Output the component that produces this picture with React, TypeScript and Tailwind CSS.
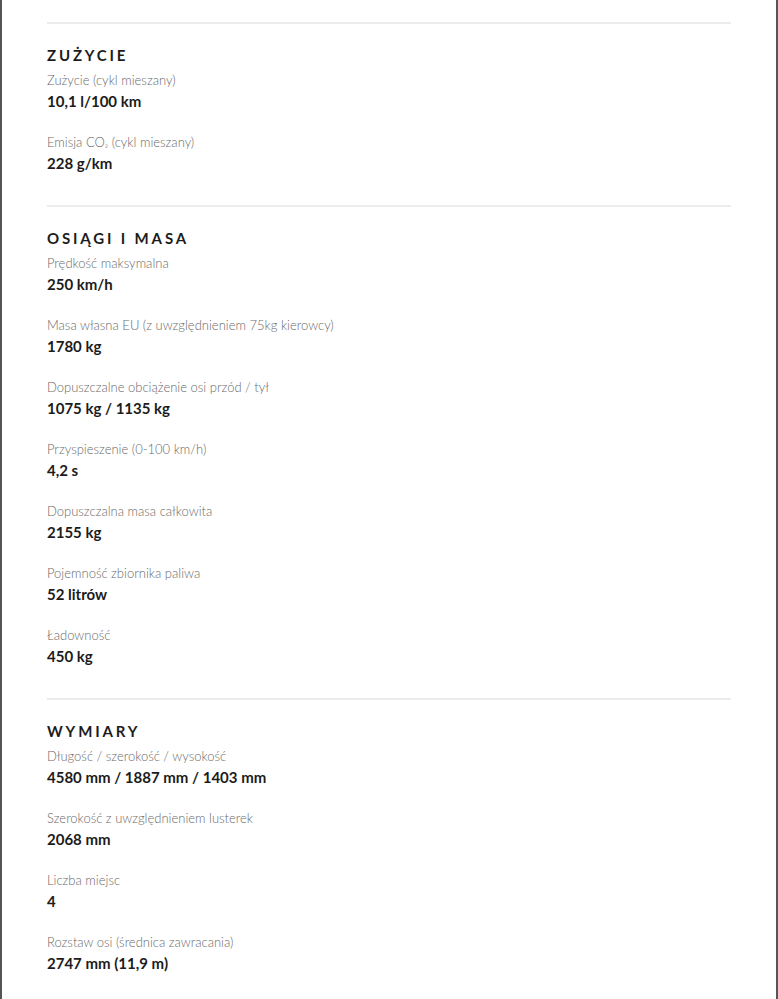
import React from 'react'

interface ISpec {
  label: React.ReactNode
  value: string
}

interface ISection {
  title: string
  items: ISpec[]
}

const sections: ISection[] = [
  {
    title: 'Zużycie',
    items: [
      { label: 'Zużycie (cykl mieszany)', value: '10,1 l/100 km' },
      { label: <>Emisja CO<span className="text-[10px]">₂</span> (cykl mieszany)</>, value: '228 g/km' },
    ],
  },
  {
    title: 'Osiągi i masa',
    items: [
      { label: 'Prędkość maksymalna', value: '250 km/h' },
      { label: 'Masa własna EU (z uwzględnieniem 75kg kierowcy)', value: '1780 kg' },
      { label: 'Dopuszczalne obciążenie osi przód / tył', value: '1075 kg / 1135 kg' },
      { label: 'Przyspieszenie (0-100 km/h)', value: '4,2 s' },
      { label: 'Dopuszczalna masa całkowita', value: '2155 kg' },
      { label: 'Pojemność zbiornika paliwa', value: '52 litrów' },
      { label: 'Ładowność', value: '450 kg' },
    ],
  },
  {
    title: 'Wymiary',
    items: [
      { label: 'Długość / szerokość / wysokość', value: '4580 mm / 1887 mm / 1403 mm' },
      { label: 'Szerokość z uwzględnieniem lusterek', value: '2068 mm' },
      { label: 'Liczba miejsc', value: '4' },
      { label: 'Rozstaw osi (średnica zawracania)', value: '2747 mm (11,9 m)' },
      { label: 'Pojemność bagażnika', value: '440 l' },
    ],
  },
]

const Spec: React.FC<ISpec> = ({ label, value }) => (
  <div className="pb-[20px]">
    <p className="h-[20px] text-[13px] leading-[20px] font-light text-[#6a6a6a]">{label}</p>
    <p className="h-[22px] text-[15px] leading-[22px] font-bold text-[#1c1c1c]">{value}</p>
  </div>
)

export default function App() {
  return (
    <main
      className="h-[999px] w-[778px] bg-white border-x-2 border-[#555555] overflow-hidden"
      style={{ fontFamily: 'Lato, "Noto Sans", sans-serif' }}
    >
      <div className="px-[45px] pt-[22px]">
        {sections.map((s) => (
          <section key={s.title} className="border-t-2 border-[#ececec] pt-[21px] pb-[11px]">
            <h2 className="h-[20px] text-[15px] leading-[20px] font-bold uppercase tracking-[0.19em] text-[#1c1c1c]">
              {s.title}
            </h2>
            <div className="mt-[5px]">
              {s.items.map((it, i) => (
                <Spec key={i} label={it.label} value={it.value} />
              ))}
            </div>
          </section>
        ))}
      </div>
    </main>
  )
}
